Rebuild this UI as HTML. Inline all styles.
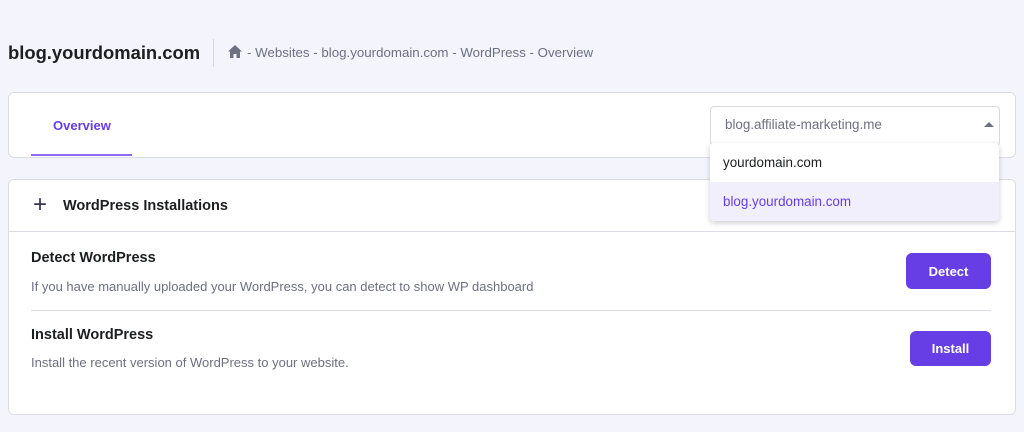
<!DOCTYPE html>
<html><head><style>
body{margin:0;width:1024px;height:432px;background:#f4f4fc;font-family:"Liberation Sans",sans-serif;position:relative;overflow:hidden;color:#2f1c6a}
.a{position:absolute;white-space:nowrap}
.card{position:absolute;background:#fff;border:1px solid #dcdce6;border-radius:6px}
.btn{position:absolute;background:#673de6;color:#fff;font-weight:bold;font-size:13px;border-radius:6px;display:flex;align-items:center;justify-content:center}
</style></head><body>
<div class="a" style="left:8px;top:42px;font-size:18.4px;font-weight:bold;color:#1d1e20">blog.yourdomain.com</div>
<div class="a" style="left:213px;top:39px;width:1px;height:28px;background:#d8d8e0"></div>
<svg class="a" style="left:228px;top:45px" width="14" height="13" viewBox="0 0 14 13"><path d="M7 0L0 6.5h2V13h3.5V9h3v4H12V6.5h2z" fill="#6d7081"/></svg>
<div class="a" style="left:247px;top:45px;font-size:13.3px;color:#6d7081">- Websites - blog.yourdomain.com - WordPress - Overview</div>

<div class="card" style="left:8px;top:92px;width:1006px;height:64px"></div>
<div class="a" style="left:53px;top:118px;font-size:13px;font-weight:bold;color:#673de6">Overview</div>
<div class="a" style="left:31px;top:154px;width:101px;height:2px;background:#8c6cf0"></div>

<div class="card" style="left:8px;top:179px;width:1006px;height:234px"></div>
<div class="a" style="left:33px;top:193px;font-size:24px;color:#36344d;line-height:24px;font-weight:300">+</div>
<div class="a" style="left:63px;top:198px;font-size:14.5px;font-weight:bold;color:#1d1e20">WordPress Installations</div>
<div class="a" style="left:9px;top:231px;width:1006px;height:1px;background:#dcdce6"></div>
<div class="a" style="left:31px;top:250px;font-size:14.5px;font-weight:bold;color:#1d1e20">Detect WordPress</div>
<div class="a" style="left:31px;top:279px;font-size:13px;color:#6d7081">If you have manually uploaded your WordPress, you can detect to show WP dashboard</div>
<div class="btn" style="left:906px;top:253px;width:85px;height:36px">Detect</div>
<div class="a" style="left:31px;top:310px;width:960px;height:1px;background:#dcdce6"></div>
<div class="a" style="left:31px;top:327px;font-size:14.5px;font-weight:bold;color:#1d1e20">Install WordPress</div>
<div class="a" style="left:31px;top:355px;font-size:13px;color:#6d7081">Install the recent version of WordPress to your website.</div>
<div class="btn" style="left:910px;top:331px;width:81px;height:35px">Install</div>

<div class="a" style="left:710px;top:106px;width:288px;height:38px;background:#fff;border:1px solid #d8d8e0;border-radius:4px"></div>
<div class="a" style="left:725px;top:117px;font-size:13.4px;color:#6d7081">blog.affiliate-marketing.me</div>
<div class="a" style="left:984px;top:122px;width:0;height:0;border-left:5px solid transparent;border-right:5px solid transparent;border-bottom:5px solid #6d7081"></div>
<div class="a" style="left:710px;top:143px;width:289px;height:78px;background:#fff;border-radius:4px;box-shadow:0 2px 6px rgba(0,0,0,.2);overflow:hidden">
<div style="height:39px;line-height:39px;padding-left:13px;font-size:13.4px;color:#1d1e20">yourdomain.com</div>
<div style="height:39px;line-height:39px;padding-left:13px;font-size:13.4px;color:#673de6;background:#f1effb">blog.yourdomain.com</div>
</div>
</body></html>
